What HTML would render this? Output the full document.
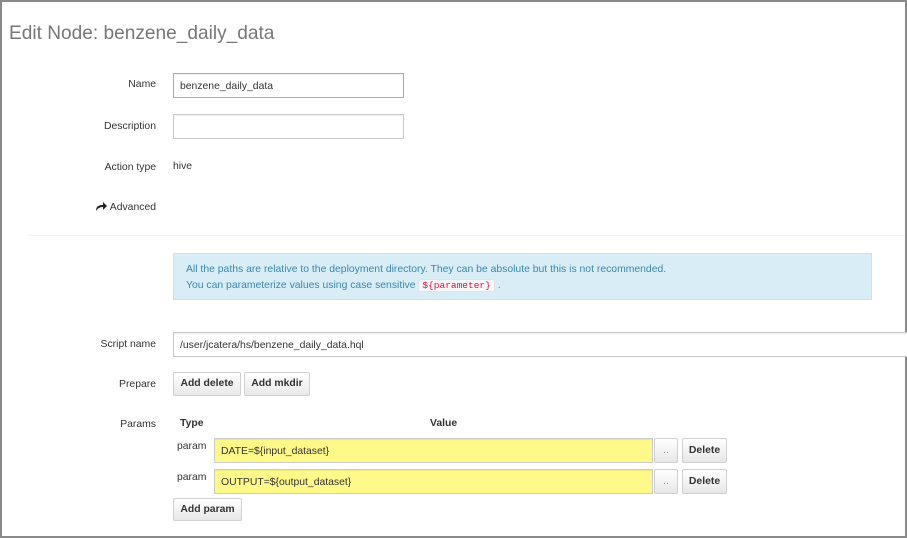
<!DOCTYPE html>
<html><head><style>
html,body{margin:0;padding:0;}
body{width:907px;height:538px;position:relative;overflow:hidden;background:#fff;font-family:"Liberation Sans",Arial,sans-serif;font-size:10.4px;color:#333;}
.frame{position:absolute;left:0;top:0;width:903px;height:534px;border:2px solid #8a8a8a;}
.a{position:absolute;}
.lbl{position:absolute;right:751px;text-align:right;white-space:nowrap;}
.inp{position:absolute;box-sizing:border-box;border:1px solid #c8c8c8;background:#fff;padding:1px 6px 0;line-height:24px;box-shadow:inset 0 1px 1px rgba(0,0,0,.07);}
.btn{position:absolute;box-sizing:border-box;border:1px solid #d0d0d0;border-radius:2px;background:linear-gradient(#fff,#e8e8e8);font-weight:bold;text-align:center;color:#333;}
.y{background:#fff98a;border-color:#ccc;}
</style></head><body>
<div class="frame"></div>
<div class="a" style="left:9px;top:23px;font-size:19.1px;color:#777;">Edit Node: benzene_daily_data</div>

<div class="lbl" style="top:79px;">Name</div>
<div class="inp" style="left:173px;top:73px;width:231px;height:25px;border-color:#aaa;">benzene_daily_data</div>
<div class="lbl" style="top:121px;">Description</div>
<div class="inp" style="left:173px;top:114px;width:231px;height:25px;"></div>
<div class="lbl" style="top:162px;">Action type</div>
<div class="a" style="left:173px;top:161px;">hive</div>
<div class="lbl" style="top:202px;"><svg width="11" height="9" viewBox="0 0 11 9" style="vertical-align:-1px"><path d="M0 9 C0 4 3 3 7 3 L7 0 L11 4 L7 8 L7 5 C4 5 2 6 0 9Z" fill="#222"/></svg> Advanced</div>
<div class="a" style="left:28px;top:235px;width:877px;height:1px;background:#eee;"></div>

<div class="a" style="left:173px;top:253px;width:699px;height:47px;box-sizing:border-box;background:#d9edf7;border:1px solid #bce8f1;color:#3a87ad;padding:8px 0 0 12px;line-height:16px;">All the paths are relative to the deployment directory. They can be absolute but this is not recommended.<br>You can parameterize values using case sensitive <span style="font-family:'Liberation Mono',monospace;font-size:9.5px;color:#d14;background:#f7f7f9;border:1px solid #e1e1e8;border-radius:2px;padding:0 3px;">${parameter}</span> .</div>

<div class="lbl" style="top:339px;">Script name</div>
<div class="inp" style="left:173px;top:332px;width:740px;height:25px;">/user/jcatera/hs/benzene_daily_data.hql</div>
<div class="lbl" style="top:379px;">Prepare</div>
<div class="btn" style="left:173px;top:372px;width:68px;height:24px;line-height:22px;">Add delete</div>
<div class="btn" style="left:244px;top:372px;width:66px;height:24px;line-height:22px;">Add mkdir</div>

<div class="lbl" style="top:419px;">Params</div>
<div class="a" style="left:180px;top:418px;font-weight:bold;">Type</div>
<div class="a" style="left:430px;top:418px;font-weight:bold;">Value</div>
<div class="a" style="left:177px;top:441px;">param</div>
<div class="inp y" style="left:214px;top:438px;width:439px;height:25px;">DATE=${input_dataset}</div>
<div class="btn" style="left:654px;top:438px;width:24px;height:25px;line-height:24px;font-weight:normal;color:#888;">..</div>
<div class="btn" style="left:682px;top:438px;width:45px;height:25px;line-height:23px;">Delete</div>
<div class="a" style="left:177px;top:472px;">param</div>
<div class="inp y" style="left:214px;top:469px;width:439px;height:25px;">OUTPUT=${output_dataset}</div>
<div class="btn" style="left:654px;top:469px;width:24px;height:25px;line-height:24px;font-weight:normal;color:#888;">..</div>
<div class="btn" style="left:682px;top:469px;width:45px;height:25px;line-height:23px;">Delete</div>
<div class="btn" style="left:173px;top:498px;width:69px;height:23px;line-height:21px;">Add param</div>
</body></html>
